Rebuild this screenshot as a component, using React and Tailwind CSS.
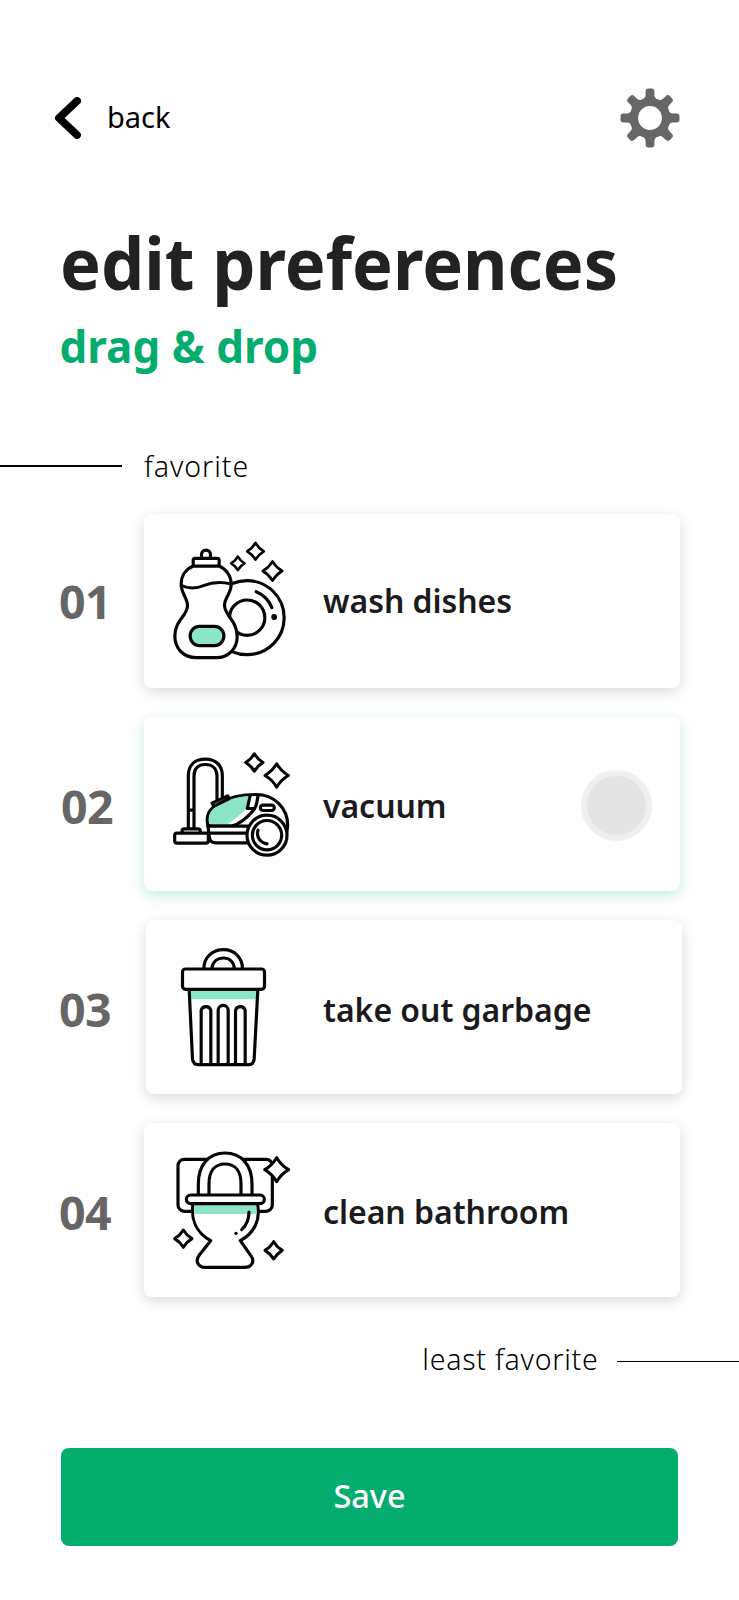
const INK = "#050505";
const MINT = "#8ce5c6";

function Sparkle({ x, y, r, w = 9 }) {
  const k = r * 0.37;
  const d = `M${x} ${y - r}Q${x + k} ${y - k} ${x + r} ${y}Q${x + k} ${y + k} ${x} ${y + r}Q${x - k} ${y + k} ${x - r} ${y}Q${x - k} ${y - k} ${x} ${y - r}Z`;
  return <path d={d} fill="#fff" strokeWidth={w} />;
}

function Icon({ viewBox, children }) {
  return (
    <svg
      className="size-[140px] shrink-0"
      viewBox={viewBox}
      fill="none"
      stroke={INK}
      strokeWidth="9.500"
      strokeLinecap="round"
      strokeLinejoin="round"
    >
      {children}
    </svg>
  );
}

function DishesIcon() {
  return (
    <Icon viewBox="1.5 3 420 420">
      <circle cx="263" cy="263" r="111" />
      <circle cx="263" cy="263" r="53" />
      <path d="M290 185Q324 199 337 233" />
      <circle cx="344" cy="261" r="4" fill={INK} />
      <path
        fill="#fff"
        d="M102 108C80 116 65 136 65 163C65 192 84 203 84 227C84 258 46 270 46 319C46 357 74 383 110 383H170C207 383 233 355 233 320C233 270 195 258 195 226C195 203 215 192 215 163C215 137 199 116 178 108Z"
      />
      <path d="M66 167Q99 181 132 167Q171 151 215 162" />
      <path fill="#fff" d="M126 85V74A13.500 13.500 0 0 1 153 74V85" />
      <rect x="101" y="85" width="78" height="23" rx="6" fill="#fff" />
      <rect x="92" y="289" width="101" height="58" rx="28" fill={MINT} />
      <Sparkle x={235} y={100} r={20} w={8} />
      <Sparkle x={288} y={64} r={25} w={8} />
      <Sparkle x={339} y={123} r={29} w={8} />
    </Icon>
  );
}

function VacuumIcon() {
  return (
    <Icon viewBox="0 -18.5 420 420">
      <path d="M85 264V107C85 74 105 57 136 57C167 57 187 75 187 107V171M102 264V107C102 85 115 73 136 73C158 73 171 86 171 107V181M86 210H102" />
      <path fill="#fff" d="M66 279V273Q66 266 74 266H113Q121 266 121 273V279" />
      <rect x="44" y="279" width="101" height="30" rx="7" fill="#fff" />
      <path fill="#fff" d="M144 258C136 224 148 207 175 190C208 170 248 163 288 163C342 163 383 203 383 255L380 280H267L150 257Z" />
      <path fill={MINT} stroke="none" d="M148 252C142 224 151 208 179 192C209 175 239 168 269 168L261 205C244 219 226 237 203 252Z" />
      <path d="M144 258H213C244 250 263 232 283 207M270 169L262 205H284C291 193 292 180 294 166" />
      <path fill="#fff" d="M156 189L203 167L208 175L162 198Z" />
      <path fill="#fff" d="M144 258H265V308H167Q150 308 148 291ZM148 279H263" />
      <rect x="301" y="195" width="42" height="16" rx="8" />
      <circle cx="321" cy="285" r="60" fill="#fff" />
      <circle cx="321" cy="285" r="44" />
      <path d="M294 270C288 290 301 308 321 311" />
      <Sparkle x={283} y={67} r={26} />
      <Sparkle x={350} y={106} r={35} />
    </Icon>
  );
}

function GarbageIcon() {
  return (
    <Icon viewBox="7.5 5 420 420">
      <path d="M133 101C133 65 159 43 192 43C225 43 249 67 249 101M157 101V98C160 78 175 68 192 68C210 68 223 80 225 101" />
      <path stroke="none" fill={MINT} d="M91 162H294L292 192H92Z" />
      <path d="M89 163L99 371Q101 388 116 388H268Q282 388 284 371L295 163" />
      <rect x="69" y="101" width="246" height="61" rx="9" fill="#fff" />
      <path d="M125 387V225A15 15 0 0 1 154 225V387M176 387V225A15 15 0 0 1 206 225V387M228 387V225A15 15 0 0 1 257 225V387" />
    </Icon>
  );
}

function BathroomIcon() {
  return (
    <Icon viewBox="0 0 420 420">
      <rect x="54" y="58" width="283" height="156" rx="19" />
      <path fill="#fff" d="M115 164V132C115 75 146 39 195 39C244 39 276 75 276 132V164" />
      <path d="M147 164V132C147 93 165 72 195 72C226 72 243 93 243 132V164" />
      <path fill="#fff" d="M99 192C92 237 108 278 152 302L118 345C102 366 119 382 135 382H254C273 382 287 366 272 346L241 302C283 279 303 238 292 192Z" />
      <path fill={MINT} stroke="none" d="M103 192H289V222H103Z" />
      <rect x="79" y="165" width="234" height="26" rx="13" fill="#fff" />
      <path d="M267 216C267 238 260 255 245 269" />
      <circle cx="228" cy="280" r="5" fill={INK} stroke="none" />
      <Sparkle x={350} y={89} r={36} />
      <Sparkle x={70} y={296} r={26} />
      <Sparkle x={341} y={331} r={26} />
    </Icon>
  );
}

function GearIcon() {
  const teeth = [0, 45, 90, 135, 180, 225, 270, 315];
  return (
    <svg className="size-[60px]" viewBox="-30 -30 60 60" fill="#666">
      {teeth.map((a) => (
        <path
          key={a}
          transform={`rotate(${a})`}
          d="M-9 -18C-5.500 -19.500 -4.500 -20.500 -4.400 -23.500V-26.500Q-4.300 -29.500 -1.800 -29.500H1.800Q4.300 -29.500 4.400 -26.500V-23.500C4.500 -20.500 5.500 -19.500 9 -18Z"
        />
      ))}
      <circle r="16" fill="none" stroke="#666" strokeWidth="8.200" />
    </svg>
  );
}

const chores = [
  { n: "01", label: "wash dishes", Art: DishesIcon, num: "-ml-px pt-0", card: "ml-0", text: "ml-[23px] pb-0" },
  { n: "02", label: "vacuum", Art: VacuumIcon, num: "ml-px pt-[4px]", card: "ml-0", text: "ml-[23px] pt-[3px]", active: true },
  { n: "03", label: "take out garbage", Art: GarbageIcon, num: "-ml-px pt-[5px]", card: "ml-[2px]", text: "ml-[21px] pt-[6px]" },
  { n: "04", label: "clean bathroom", Art: BathroomIcon, num: "-ml-px pt-[4px]", card: "ml-0", text: "ml-[23px] pt-[3px]" },
];

function Chore({ n, label, Art, num, card, text, active }) {
  const shadow = active
    ? "shadow-[0_4px_14px_rgba(4,173,110,0.24)]"
    : "shadow-[0_4px_14px_rgba(0,0,0,0.15)]";
  return (
    <li className="flex h-[174px] items-center">
      <div className="flex w-[84px] shrink-0 whitespace-nowrap">
        <span className={`${num} text-[46.500px] leading-none font-bold tracking-[-0.500px] text-[#666]`}>{n}</span>
      </div>
      <div className={`${card} ${shadow} flex h-[174px] w-[536px] shrink-0 items-center rounded-lg bg-white pl-4`}>
        <Art />
        <span className={`${text} text-[32px] leading-none font-semibold tracking-[-0.050px] whitespace-nowrap text-[#1b1b1d]`}>{label}</span>
        {active && <span className="mt-[3px] mr-[28px] ml-auto size-[71px] rounded-full border-[6px] border-[#efefef] bg-[#e4e4e4]" />}
      </div>
    </li>
  );
}

export default function App() {
  return (
    <main className="flex h-[1600px] w-[739px] flex-col overflow-hidden bg-white font-['Noto_Sans',sans-serif] text-black">
      <header className="mt-[88px] flex h-[60px] items-center justify-between pr-[59px] pl-[55px]">
        <button className="flex items-center">
          <svg className="h-[42px] w-[26px]" viewBox="0 0 26 42" fill="none" stroke="#000" strokeWidth="7.900" strokeLinecap="round" strokeLinejoin="round">
            <path d="M22 4L4 21L22 38" />
          </svg>
          <span className="ml-[26px] pb-[3px] text-[29px] leading-none">back</span>
        </button>
        <button aria-label="settings"><GearIcon /></button>
      </header>
      <h1 className="mt-[78px] ml-[60px] origin-left scale-x-[0.951] text-[72px] leading-[72px] font-bold whitespace-nowrap text-[#222]">edit preferences</h1>
      <h2 className="mt-[26px] ml-[59.500px] text-[44px] leading-[44px] font-bold whitespace-nowrap text-[#04ad6e]">drag &amp; drop</h2>
      <div className="mt-[83px] flex h-[30px] items-center">
        <span className="h-[2px] w-[122px] bg-black" />
        <span className="ml-[22px] text-[28.500px] leading-none font-light tracking-[0.950px]">favorite</span>
      </div>
      <ol className="mt-[33px] ml-[60px] flex flex-col gap-[29px]">
        {chores.map((c) => <Chore key={c.n} {...c} />)}
      </ol>
      <div className="mt-[47px] flex h-[30px] items-center justify-end">
        <span className="mr-[18.500px] text-[28.500px] leading-none font-light tracking-[0.750px]">least favorite</span>
        <span className="mt-[5px] h-[1.500px] w-[122px] bg-black" />
      </div>
      <button className="mt-[74px] ml-[61px] flex h-[98px] w-[617px] items-center justify-center rounded-lg bg-[#04ad6e] pb-[2px] text-[32.500px] leading-none font-medium text-white">Save</button>
    </main>
  );
}
